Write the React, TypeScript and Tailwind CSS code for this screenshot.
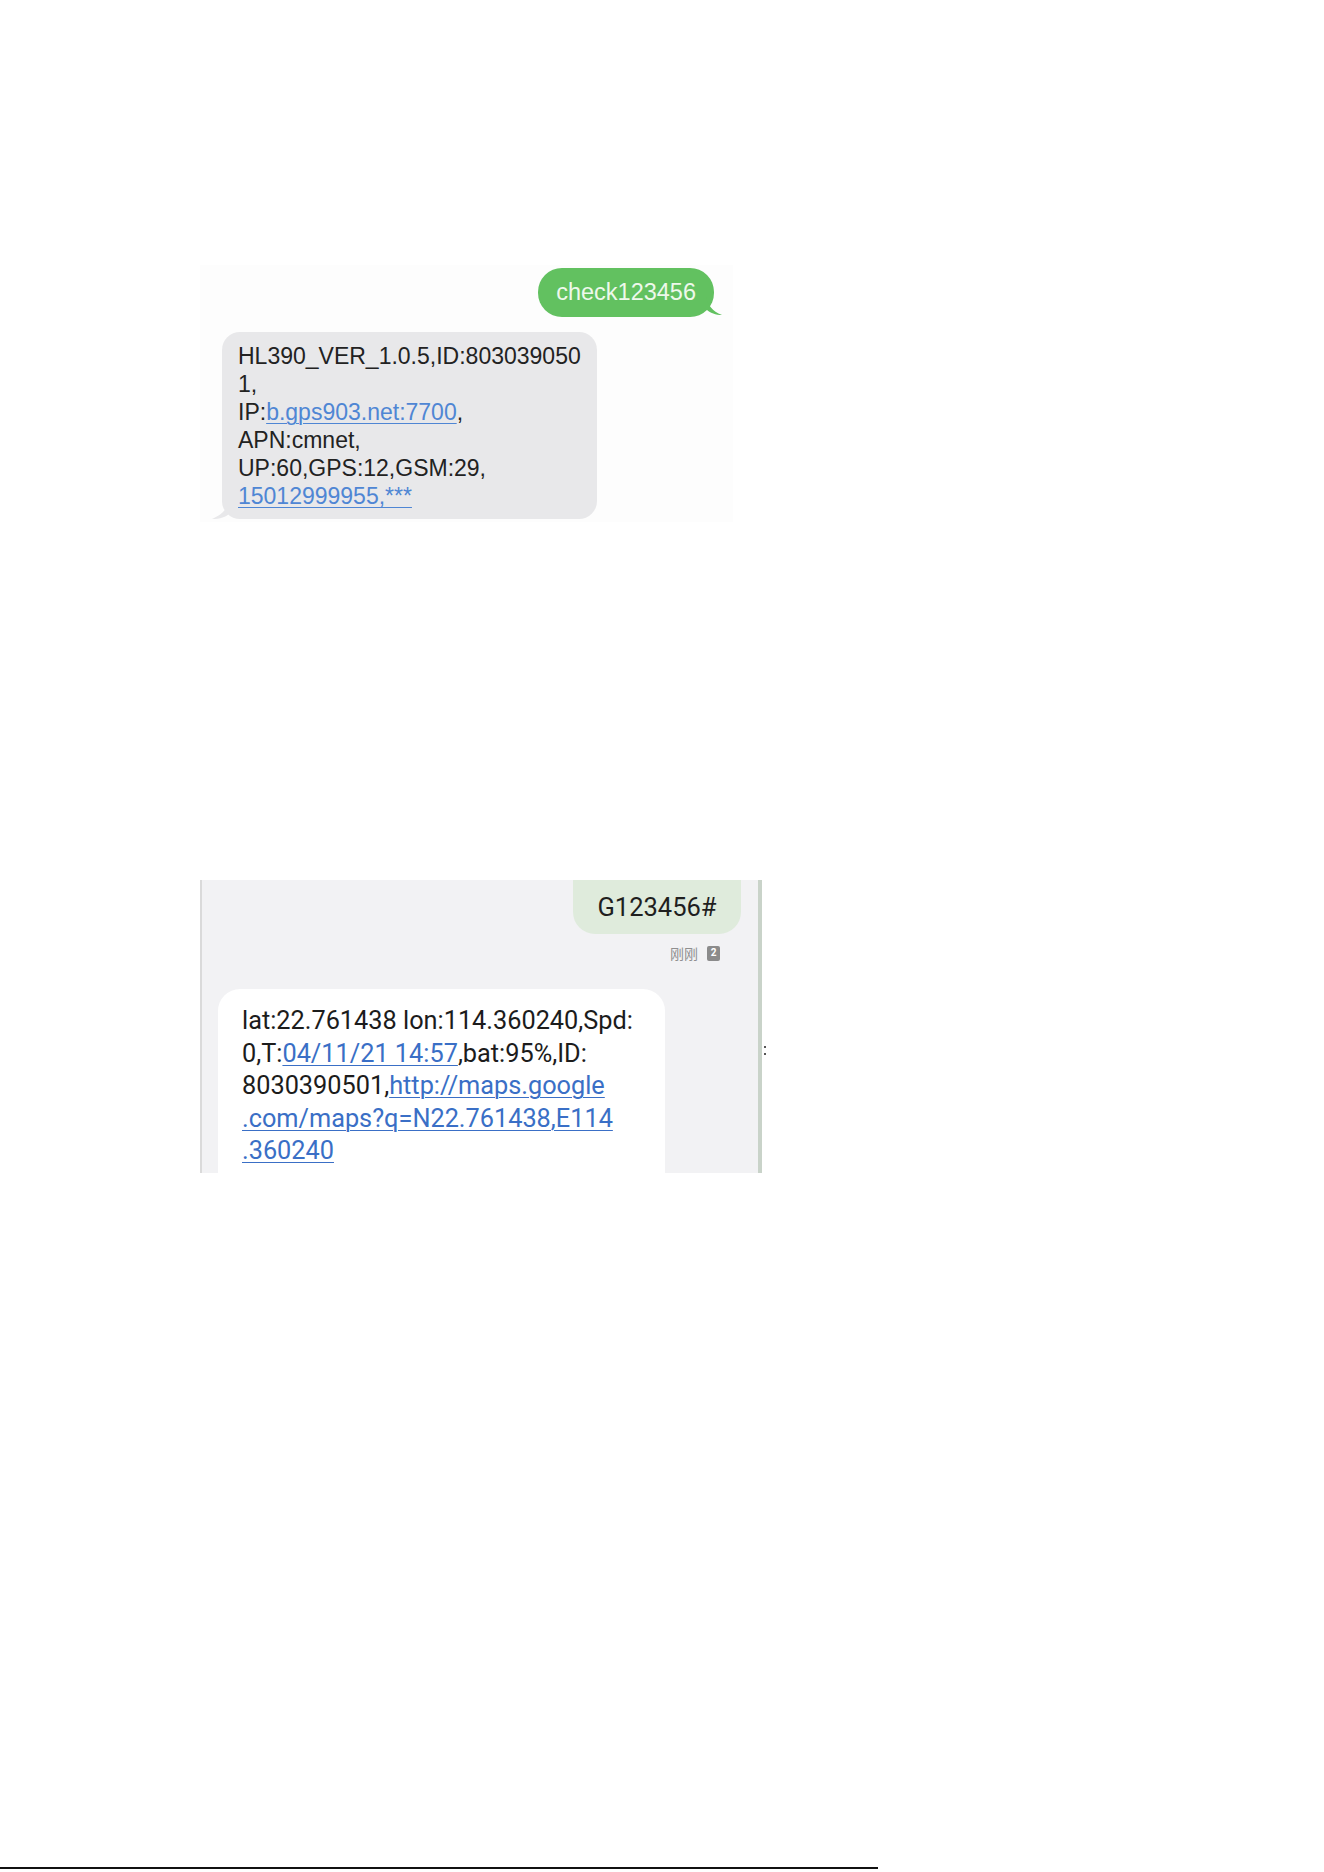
import React from 'react'

const iosFont = { fontFamily: '"Liberation Sans", Arial, sans-serif' }
const droidFont = { fontFamily: 'Roboto, "Noto Sans", "Noto Sans CJK SC", sans-serif' }

function IosLink({ children }: { children: React.ReactNode }) {
  return <span className="text-[#4f86d4] underline decoration-1 underline-offset-[3px]">{children}</span>
}

function DroidLink({ children }: { children: React.ReactNode }) {
  return <span className="text-[#3a6fc6] underline decoration-1 underline-offset-[3px]">{children}</span>
}

// first phone shot: check123456 reply
function CheckShot() {
  return (
    <div className="w-[533px] h-[257px] bg-[#fdfdfd] flex flex-col" style={iosFont}>
      <div className="flex justify-end pr-[19px] pt-[3px]">
        <div className="relative h-[49px] px-[18px] rounded-[24px] bg-[#62c160] flex items-center text-[23.5px] text-[#eef8eb]">
          check123456
          <svg className="absolute -right-[8px] bottom-[2px]" width="16" height="18" viewBox="0 0 16 18">
            <path d="M0 0 C2 8 6 14 16 18 C10 18 4 16 0 12 Z" fill="#62c160" />
          </svg>
        </div>
      </div>

      <div className="relative mt-[15px] ml-[22px] w-[375px] rounded-[18px] bg-[#e8e8ea] px-[16px] pt-[10px] pb-[9px] text-[23px] leading-[28px] text-[#222] whitespace-nowrap">
        <svg className="absolute -left-[10px] bottom-0" width="18" height="20" viewBox="0 0 18 20">
          <path d="M18 0 C16 8 12 15 0 20 C8 20 14 18 18 14 Z" fill="#e8e8ea" />
        </svg>
        HL390_VER_1.0.5,ID:803039050
        <br />
        1,
        <br />
        IP:<IosLink>b.gps903.net:7700</IosLink>,
        <br />
        APN:cmnet,
        <br />
        UP:60,GPS:12,GSM:29,
        <br />
        <IosLink>15012999955,***</IosLink>
      </div>
    </div>
  )
}

// second phone shot: G123456# reply
function LocateShot() {
  return (
    <div className="relative w-[566px]">
      <div className="w-[562px] h-[293px] overflow-hidden bg-[#f2f2f4] border-l-2 border-l-[#dadada] border-r-4 border-r-[#c9d3c9] flex flex-col" style={droidFont}>
        <div className="flex justify-end pr-[17px]">
          <div className="h-[54px] w-[168px] rounded-b-[22px] bg-[#dfebdc] flex items-center justify-center text-[25.5px] text-[#1f1f1f]">
            G123456#
          </div>
        </div>

        <div className="mt-[11px] flex justify-end items-center gap-[9px] pr-[38px] h-[16px]">
          <span className="text-[14px] text-[#8f8f8f]" style={{ fontFamily: '"Noto Sans CJK SC", sans-serif' }}>刚刚</span>
          <span className="w-[13px] h-[15px] rounded-[2px] bg-[#8b8b8b] text-white text-[10px] font-bold flex items-center justify-center leading-none">2</span>
        </div>

        <div className="mt-[28px] ml-[16px] w-[447px] shrink-0 h-[220px] rounded-[22px] bg-white px-[24px] pt-[16px] text-[25.3px] leading-[32.5px] text-[#1c1c1c] whitespace-nowrap">
          lat:22.761438 lon:114.360240,Spd:
          <br />
          0,T:<DroidLink>04/11/21 14:57</DroidLink>,bat:95%,ID:
          <br />
          8030390501,<DroidLink>http://maps.google</DroidLink>
          <br />
          <DroidLink>.com/maps?q=N22.761438,E114</DroidLink>
          <br />
          <DroidLink>.360240</DroidLink>
        </div>
      </div>
      <span className="absolute right-0 top-[166px] flex flex-col gap-[5px]">
        <span className="w-[2px] h-[2px] bg-[#555]" />
        <span className="w-[2px] h-[2px] bg-[#555]" />
      </span>
    </div>
  )
}

export default function App() {
  return (
    <div className="w-[1324px] h-[1872px] bg-white flex flex-col">
      <div className="pt-[265px] pl-[200px]">
        <CheckShot />
      </div>
      <div className="pt-[358px] pl-[200px]">
        <LocateShot />
      </div>
      <div className="mt-[694px] w-[878px] h-[2px] bg-[#111]" />
    </div>
  )
}
